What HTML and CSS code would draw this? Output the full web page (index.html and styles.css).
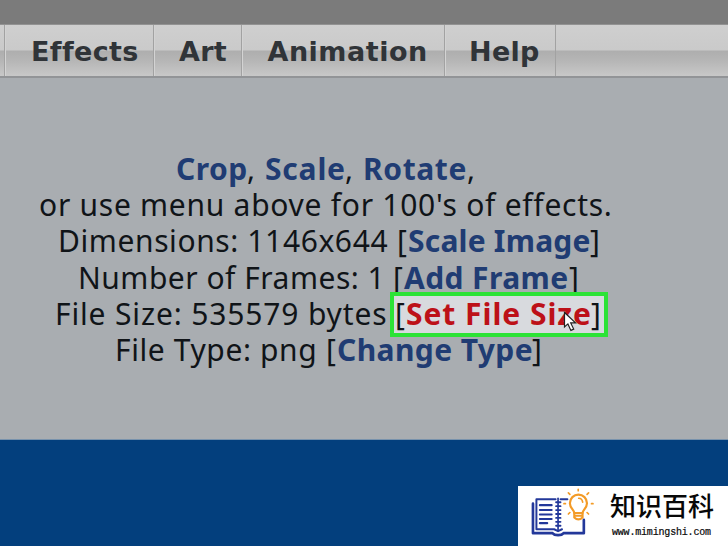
FILE: index.html
```html
<!DOCTYPE html>
<html lang="en">
<head>
<meta charset="utf-8">
<title>Image editor</title>
<link rel="stylesheet" href="styles.css">
</head>
<body>
<header class="topbar"></header>
<nav class="menu">
  <span class="stub"></span>
  <span class="item effects">Effects</span>
  <span class="item art">Art</span>
  <span class="item animation">Animation</span>
  <span class="item help">Help</span>
</nav>
<main class="panel">
  <div class="line l1"><a class="crop">Crop</a><span class="comma">,</span><a class="scale">Scale</a><span class="comma">,</span><a class="rotate">Rotate</a><span>,</span></div>
  <div class="line l2"><span>or use menu above for 100's of effects.</span></div>
  <div class="line l3"><span class="label">Dimensions: 1146x644</span><i>[</i><a>Scale Image</a><i>]</i></div>
  <div class="line l4"><span class="label">Number of Frames: 1</span><i>[</i><a>Add Frame</a><i>]</i></div>
  <div class="line l5"><span class="label">File Size: 535579 bytes</span><i>[</i><a>Set File Size</a><i>]</i>
    <div class="highlight"></div>
    <svg class="cursor" width="16" height="22" viewBox="0 0 16 22"><path d="M1.5 1.5V16l3.4-3.1 3 6.5 2.800-1.300-3-6.200h4.800z" fill="#fff" stroke="#222" stroke-width="1.2"/></svg>
  </div>
  <div class="line l6"><span class="label">File Type: png</span><i>[</i><a>Change Type</a><i>]</i></div>
</main>
<footer class="desktop">
  <div class="brand">
    <svg class="logo" width="66" height="52" viewBox="0 0 66 52" fill="none" stroke-linecap="round" stroke-linejoin="round">
      <g stroke="#23389a" stroke-width="2">
        <path d="M25 11H5.500V41.500H23.500l4 2 4-2M30 11h7"/>
        <path d="M2 15.500V45.500H22q1.500 2 5.500 2t5.500-2H53.700V32" stroke-width="2.700"/>
        <path d="M27.500 10v33" stroke-width="1.700"/>
        <path d="M25.500 14h4.500m-4.500 4h4.500m-4.500 4h4.500m-4.500 4h4.500m-4.500 4h4.500m-4.500 4h4.500m-4.500 4h4.500" stroke-width="1.900"/>
        <path d="M9 17h12M9 22h12M9 26.500h12M9 31h12M9 35.300h7.500" stroke-width="2.100"/>
      </g>
      <g stroke="#f39b27" stroke-width="2.200">
        <path d="M44 25c0-3-4.500-5-4.500-10a8.700 8.700 0 0 1 17.400 0c0 5-4.500 7-4.500 10z"/>
        <path d="M44 25v4.500q4.200 4 8.400 0V25M44.500 27.800h7.500"/>
        <path d="M48.500 10q3.500 0 4 4M48 .9v1.500M38 4.500l1.500 1.500M57 6l1.500-1.500M33.500 15.500h1.500M61.500 15.500h1.500M38 26l1.500-1.500M57 24.500l1.500 1.500" stroke-width="1.700"/>
      </g>
    </svg>
    <div class="words"><div class="name">知识百科</div><div class="url">www.mimingshi.com</div></div>
  </div>
</footer>
</body>
</html>
```
FILE: styles.css
```css
* { box-sizing: border-box; }
body { margin: 0; width: 728px; height: 546px; overflow: hidden; display: flex; flex-direction: column; background: #033f7d; }
.topbar { height: 25px; background: #7b7b7b; border-bottom: 1px solid #929292; }
.menu { display: flex; height: 53px; background: linear-gradient(#cfcfcf, #cacaca 25px, #aeaeae 26px, #b6b6b6 36px, #c8c8c8 51px); border-bottom: 2px solid #929497; font: bold 27px/54px "DejaVu Sans", sans-serif; color: #303438; }
.stub { width: 5px; border-right: 1px solid #a2a2a2; }
.item { height: 51px; border-right: 1px solid #a2a2a2; border-left: 1px solid #d3d3d3; white-space: nowrap; }
.effects { width: 149px; padding-left: 25px; letter-spacing: .35px; }
.art { width: 88px; padding-left: 24px; letter-spacing: .3px; }
.animation { width: 203px; padding-left: 24.500px; letter-spacing: .5px; }
.help { width: 111px; padding-left: 23px; letter-spacing: .3px; }
.panel { height: 362px; padding-top: 73px; background: #a9adb1; border-bottom: 1px solid #7892ac; font: 30px/36.200px "Noto Sans", sans-serif; color: #101418; }
.line { position: relative; display: flex; height: 36.200px; white-space: nowrap; }
.line > * { flex-shrink: 0; }
i { font-style: normal; width: 11px; }
a { font-weight: bold; color: #203c73; }
.l1 { padding-left: 176px; }
.crop { width: 71px; letter-spacing: .5px; }
.comma { width: 18px; }
.scale { width: 80px; letter-spacing: .8px; }
.rotate { width: 104px; letter-spacing: .6px; }
.l2 { padding-left: 39px; letter-spacing: .73px; }
.l3 { padding-left: 58px; }
.l3 .label { width: 339px; letter-spacing: .6px; }
.l3 a { width: 182px; letter-spacing: .2px; }
.l4 { padding-left: 78px; }
.l4 .label { width: 315px; letter-spacing: .5px; }
.l4 a { width: 165px; letter-spacing: .4px; }
.l5 { padding-left: 55px; }
.l5 i, .l5 a { position: relative; z-index: 1; }
.l5 .label { width: 340px; letter-spacing: .85px; }
.l5 a { width: 185px; letter-spacing: .95px; color: #bd1118; }
.l6 { padding-left: 115px; }
.l6 .label { width: 211px; letter-spacing: .6px; }
.l6 a { width: 195px; letter-spacing: .4px; }
.highlight { position: absolute; left: 390px; top: -3.800px; width: 218px; height: 45px; background: #d8dade; border: 4px solid #2ce336; }
.cursor { position: absolute; left: 563px; top: 15px; z-index: 2; }
.desktop { flex: 1; display: flex; align-items: flex-end; justify-content: flex-end; background: #033f7d; }
.brand { width: 210px; height: 60px; background: #fff; display: flex; padding: 2px 0 0 13px; }
.words { width: 120px; margin-left: 14px; color: #080808; }
.name { font: 500 26px/34px "Noto Sans CJK SC", sans-serif; white-space: nowrap; }
.url { font: 10px/12px "Liberation Mono", monospace; margin: 5px 0 0 2px; letter-spacing: -.18px; white-space: nowrap; -webkit-text-stroke: .2px #080808; }
```
